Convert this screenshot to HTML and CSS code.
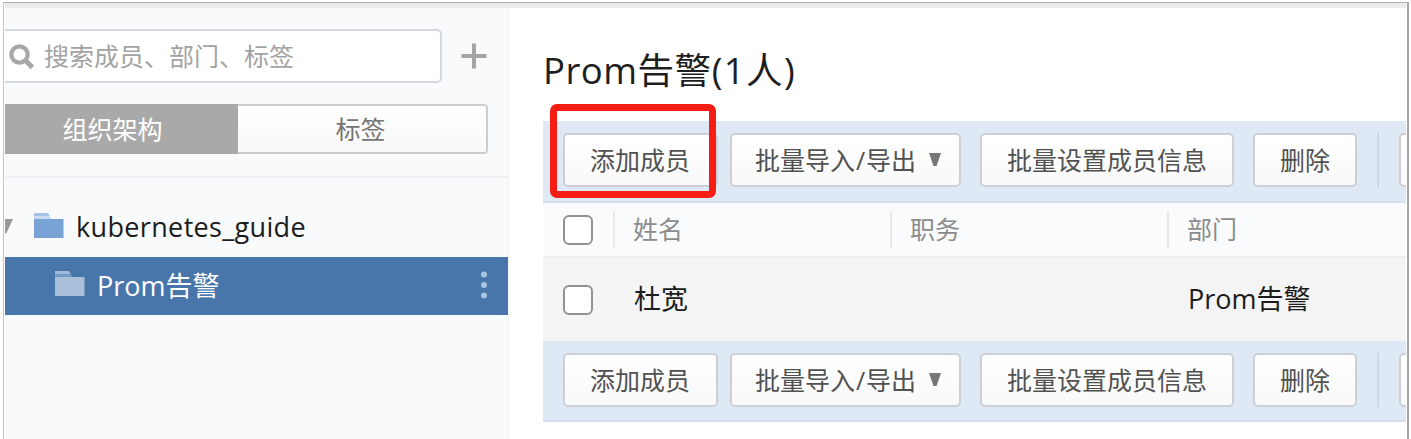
FILE: index.html
```
<!DOCTYPE html>
<html lang="zh-CN">
<head>
<meta charset="utf-8">
<title>Prom告警</title>
<link rel="stylesheet" href="styles.css">
</head>
<body>
<div class="frame">
  <div class="strip"></div>
  <div class="layout">
    <aside class="sidebar">
      <div class="search-row">
        <div class="search">
          <svg class="search-icon" width="26" height="26" viewBox="0 0 26 26"><circle cx="10.5" cy="10.5" r="8.2" fill="none" stroke="#a8a8a8" stroke-width="4.2"/><path d="M16.5 16.5L23.4 23.4" stroke="#a8a8a8" stroke-width="5"/></svg>
          <span class="placeholder">搜索成员、部门、标签</span>
        </div>
        <svg class="plus" width="26" height="26" viewBox="0 0 26 26"><path d="M0.5 13H25.5M13 0.5V25.5" stroke="#a5a5a5" stroke-width="4"/></svg>
      </div>
      <div class="tabs">
        <div class="tab tab-on">组织架构</div>
        <div class="tab">标签</div>
      </div>
      <div class="tree">
        <div class="node">
          <svg class="arrow" width="8" height="16" viewBox="0 0 8 16"><path d="M0 0H8L1.5 14L0 15Z" fill="#999"/></svg>
          <svg class="folder" width="30" height="26" viewBox="0 0 30 26"><path d="M0 0H14L16 3.5H0Z" fill="#a6c2e5"/><path d="M0 6H29.5V25H0Z" fill="#79a2d5"/><path d="M0 3.5H16L17 6H0Z" fill="#c9daef"/></svg>
          <span class="node-text root-text">kubernetes_guide</span>
        </div>
        <div class="node node-on">
          <svg class="folder" width="30" height="26" viewBox="0 0 30 26"><path d="M0 0H14L16 3.5H0Z" fill="#9fb9d8"/><path d="M0 6H29.5V25H0Z" fill="#aabfda"/><path d="M0 3.5H16L17 6H0Z" fill="#7799c3"/></svg>
          <span class="node-text">Prom告警</span>
          <svg class="dots" width="8" height="28" viewBox="0 0 8 28"><g fill="#aac3e0"><circle cx="4" cy="3.5" r="3"/><circle cx="4" cy="14" r="3"/><circle cx="4" cy="24.5" r="3"/></g></svg>
        </div>
      </div>
    </aside>
    <main class="main">
      <h1 class="title">Prom告警<span class="count">(1人)</span></h1>
      <div class="bar">
        <div class="btn btn-add">添加成员<span class="mark"></span></div>
        <div class="btn btn-io">批量导入<span class="slash">/</span>导出<svg class="caret" width="12" height="15" viewBox="0 0 12 15"><path d="M0 0H12L7.5 13H4.5Z" fill="#777"/></svg></div>
        <div class="btn btn-set">批量设置成员信息</div>
        <div class="btn btn-del">删除</div>
        <span class="sep"></span>
        <div class="btn btn-more"></div>
      </div>
      <div class="row head">
        <span class="check"></span>
        <span class="cell cell-first">姓名</span>
        <span class="cell">职务</span>
        <span class="cell">部门</span>
      </div>
      <div class="row member">
        <span class="check"></span>
        <span class="cell cell-first">杜宽</span>
        <span class="cell"></span>
        <span class="cell">Prom告警</span>
      </div>
      <div class="bar bar-foot">
        <div class="btn btn-add">添加成员</div>
        <div class="btn btn-io">批量导入<span class="slash">/</span>导出<svg class="caret" width="12" height="15" viewBox="0 0 12 15"><path d="M0 0H12L7.5 13H4.5Z" fill="#777"/></svg></div>
        <div class="btn btn-set">批量设置成员信息</div>
        <div class="btn btn-del">删除</div>
        <span class="sep"></span>
        <div class="btn btn-more"></div>
      </div>
    </main>
  </div>
</div>
</body>
</html>
```
FILE: styles.css
```
* { box-sizing: border-box; }
body {
  margin: 0;
  height: 439px;
  overflow: hidden;
  padding: 2px 2px 0 3px;
  background: #fff;
  color: #1c1c1c;
  font: 25px/36px "Open Sans", "Noto Sans CJK SC", sans-serif;
  white-space: nowrap;
}
.frame {
  height: 437px;
  border: 1px solid #b0b0b0;
  border-right: 2px solid #a6a6a6;
  border-left-color: #c4c4c4;
  border-bottom: 0;
  padding: 0 1px;
  overflow: hidden;
}
.strip { height: 5px; background: #ececec; }
.layout { display: flex; height: 431px; }
.sidebar {
  width: 504px;
  flex: none;
  background: #f8fafc;
  border-right: 1px solid #f0f2f4;
  padding-top: 21px;
}
.search-row { display: flex; align-items: center; }
.search {
  width: 437px;
  height: 54px;
  border: 2px solid #d4d7df;
  border-left: 0;
  border-radius: 0 5px 5px 0;
  background: #fff;
  display: flex;
  align-items: center;
  padding-left: 4px;
}
.search-icon { margin-top: 2px; }
.placeholder { margin-left: 9px; color: #a3a3a3; }
.plus { margin-left: 19px; }
.tabs {
  width: 483px;
  height: 50px;
  margin-top: 21px;
  border: 2px solid #cdcdcd;
  border-left: 0;
  border-radius: 0 4px 4px 0;
  display: flex;
  background: linear-gradient(#fff, #f8f8f8);
}
.tab { flex: 1; text-align: center; line-height: 47px; padding-right: 3px; color: #757575; }
.tab-on { flex: none; width: 233px; margin: -2px 0; line-height: 51px; padding-right: 18px; background: #a9a9a9; color: #fff; }
.tree { margin-top: 22px; border-top: 2px solid #eff1f4; padding-top: 22px; font-size: 27px; }
.node { height: 57px; display: flex; align-items: center; padding-bottom: 3px; }
.node-text { margin-left: 12px; line-height: 40px; }
.root-text { letter-spacing: 0.35px; }
.arrow { margin-right: 21px; }
.folder { margin-top: -3px; }
.node-on { height: 58px; background: #4876ab; color: #fff; padding: 0 20px 1px 50px; }
.dots { margin-left: auto; margin-top: -2px; }
.main { flex: 1; min-width: 0; overflow: hidden; padding-left: 34px; }
.title {
  margin: 0;
  height: 113px;
  padding-top: 36px;
  font-size: 36.5px;
  font-weight: 400;
  line-height: 52px;
  letter-spacing: 0.5px;
  color: #1e1e1e;
}
.count { letter-spacing: 1.4px; }
.bar {
  height: 82px;
  padding: 12px 0 0 20px;
  border-bottom: 2px solid #d6e0ec;
  background: #dfe9f5;
  display: flex;
}
.bar-foot { height: 81px; }
.btn {
  height: 54px;
  flex: none;
  border: 2px solid #ccd0d5;
  border-radius: 5px;
  background: linear-gradient(#fff, #f9f9f9);
  color: #515151;
  text-align: center;
  line-height: 50px;
  position: relative;
}
.btn-add { width: 155px; padding-right: 1px; }
.btn-io { width: 231px; margin-left: 12px; padding-left: 5px; }
.slash { padding: 0 1px; }
.btn-set { width: 254px; margin-left: 19px; }
.btn-del { width: 104px; margin-left: 19px; }
.sep { width: 2px; height: 54px; margin-left: 20px; background: #ccd5e0; flex: none; }
.btn-more { width: 60px; margin-left: 20px; }
.caret { margin-left: 13px; vertical-align: 2px; }
.mark {
  position: absolute;
  left: -15px;
  top: -31px;
  width: 166px;
  height: 94px;
  border: 7px solid #f51d14;
  border-radius: 7px;
}
.row { display: flex; align-items: center; padding-left: 20px; }
.head { height: 55px; background: #f9fbfd; color: #8c8c8c; border-bottom: 2px solid #eceef0; }
.member { height: 83px; background: #f4f4f4; font-size: 27px; }
.check { width: 30px; height: 30px; flex: none; border: 2px solid #929292; border-radius: 6px; background: #fff; }
.cell { width: 277px; flex: none; height: 38px; padding-left: 18px; border-left: 2px solid #e6e8ea; line-height: 36px; }
.cell-first { margin-left: 20px; }
.member .cell { border-color: transparent; padding-left: 19px; }
```
